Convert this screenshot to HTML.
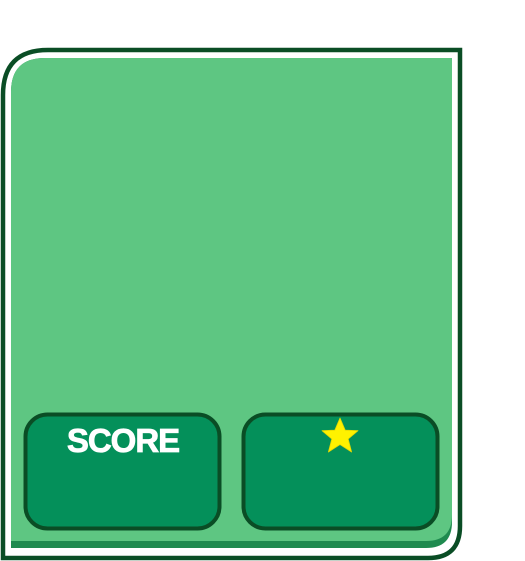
<!DOCTYPE html>
<html><head><style>
html,body{margin:0;padding:0;background:#fff;width:525px;height:561px;overflow:hidden}
</style></head><body>
<svg width="525" height="561" viewBox="0 0 525 561" xmlns="http://www.w3.org/2000/svg" style="display:block">
  <path d="M3 558 L3 95 Q3 50 48 50 L460 50 L460 526 Q460 558 428 558 Z" fill="#fff" stroke="#0a4d25" stroke-width="4.5"/>
  <path d="M11 548 L11 92 Q11 58 45 58 L452 58 L452 522 Q452 548 426 548 Z" fill="#1f8a4f"/>
  <path d="M11 541 L11 92 Q11 58 45 58 L452 58 L452 515 Q452 541 426 541 Z" fill="#5ec682"/>
  <rect x="25.5" y="414.5" width="194" height="114" rx="22" fill="#04905a" stroke="#0a4d25" stroke-width="4"/>
  <rect x="243.5" y="414.5" width="194" height="114" rx="22" fill="#04905a" stroke="#0a4d25" stroke-width="4"/>
  <text x="123" y="452" text-anchor="middle" font-family="Liberation Sans, sans-serif" font-weight="bold" font-size="33" letter-spacing="-1" fill="#fff" stroke="#fff" stroke-width="0.8">SCORE</text>
  <path d="M340 418 L345.2 430.2 L358 430.7 L348.2 439 L351.6 452 L340 444.6 L328.4 452 L331.8 439 L322 430.7 L334.8 430.2 Z" fill="#fff200" stroke="#e6d800" stroke-width="0.8" stroke-linejoin="round"/>
</svg>
</body></html>
